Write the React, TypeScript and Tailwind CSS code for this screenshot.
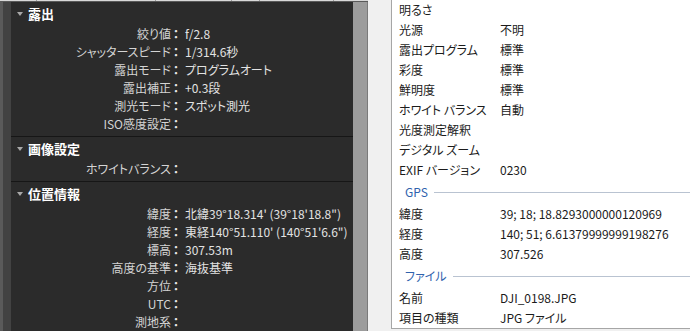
import React from "react";

const font = { fontFamily: '"Noto Sans CJK JP", "Noto Sans", sans-serif', fontFeatureSettings: '"palt"' };

type Row = [string, string];

const sections: { title: string; rows: Row[] }[] = [
  {
    title: "露出",
    rows: [
      ["絞り値", "f/2.8"],
      ["シャッタースピード", "1/314.6秒"],
      ["露出モード", "プログラムオート"],
      ["露出補正", "+0.3段"],
      ["測光モード", "スポット測光"],
      ["ISO感度設定", ""],
    ],
  },
  { title: "画像設定", rows: [["ホワイトバランス", ""]] },
  {
    title: "位置情報",
    rows: [
      ["緯度", "北緯39°18.314' (39°18'18.8\")"],
      ["経度", "東経140°51.110' (140°51'6.6\")"],
      ["標高", "307.53m"],
      ["高度の基準", "海抜基準"],
      ["方位", ""],
      ["UTC", ""],
      ["測地系", ""],
    ],
  },
];

const props: (Row | string)[] = [
  ["明るさ", ""],
  ["光源", "不明"],
  ["露出プログラム", "標準"],
  ["彩度", "標準"],
  ["鮮明度", "標準"],
  ["ホワイト バランス", "自動"],
  ["光度測定解釈", ""],
  ["デジタル ズーム", ""],
  ["EXIF バージョン", "0230"],
  "GPS",
  ["緯度", "39; 18; 18.8293000000120969"],
  ["経度", "140; 51; 6.61379999999198276"],
  ["高度", "307.526"],
  "ファイル",
  ["名前", "DJI_0198.JPG"],
  ["項目の種類", "JPG ファイル"],
];

function Section({ title, rows, last }: { title: string; rows: Row[]; last?: boolean }) {
  return (
    <div className={last ? "" : "border-b border-[#161616] pb-[3px]"}>
      <div className="flex h-[23px] items-center">
        <span className="ml-[6px] mr-[5px] h-0 w-0 border-x-[3px] border-t-[4px] border-x-transparent border-t-[#a8a8a8]" />
        <span className="text-[13px] font-bold leading-none text-white">{title}</span>
      </div>
      {rows.map(([k, v]) => (
        <div key={k} className="flex h-[18px] items-center text-[12px] leading-none">
          <span className="w-[160px] text-right text-[#d4d4d4]">{k}</span>
          <span className="w-[10px] text-center font-bold text-[#e8e8e8]">：</span>
          <span className="ml-[4px] text-[#e2e2e2]">{v}</span>
        </div>
      ))}
    </div>
  );
}

export default function App() {
  return (
    <div className="flex h-[331px] w-[690px] overflow-hidden bg-[#f0f0f0]" style={font}>
      {/* dark metadata panel */}
      <div className="flex w-[368px] shrink-0 flex-col">
        <div className="relative h-[4px] border-b border-[#5a5a5a] bg-[#d9d9d9]">
          <span className="absolute left-[36px] top-0 h-full w-px bg-[#9a9a9a]" />
          <span className="absolute left-[155px] top-0 h-full w-px bg-[#9a9a9a]" />
          <span className="absolute left-[231px] top-0 h-full w-px bg-[#9a9a9a]" />
          <span className="absolute left-[259px] top-0 h-full w-px bg-[#9a9a9a]" />
          <span className="absolute left-[333px] top-0 h-full w-px bg-[#9a9a9a]" />
        </div>
        <div className="flex flex-1">
          <div className="w-[11px] border-l-[3px] border-[#5a5a5a] bg-[#424242]" />
          <div className="w-[342px] bg-[#2b2b2b]">
            {sections.map((s, i) => (
              <Section key={s.title} title={s.title} rows={s.rows} last={i === sections.length - 1} />
            ))}
          </div>
          <div className="w-[15px] border-r border-[#7a7a7a] bg-[#9c9c9c]" />
        </div>
      </div>

      {/* properties panel */}
      <div className="ml-[23px] flex h-[329px] flex-1 flex-col border-b border-l border-[#a6a6a6] bg-white pl-[7px] text-[12px] leading-none text-[#1b1b1b]">
        {props.map((p) =>
          typeof p === "string" ? (
            <div key={p} className="flex h-[24px] items-center pl-[6px]">
              <span className="text-[#2f62ad]">{p}</span>
              <span className="ml-[6px] h-px flex-1 bg-[#b9c3d1]" />
            </div>
          ) : (
            <div key={p[0] + p[1]} className="flex h-[20px] items-center">
              <span className="w-[101px]">{p[0]}</span>
              <span>{p[1]}</span>
            </div>
          )
        )}
      </div>
    </div>
  );
}
